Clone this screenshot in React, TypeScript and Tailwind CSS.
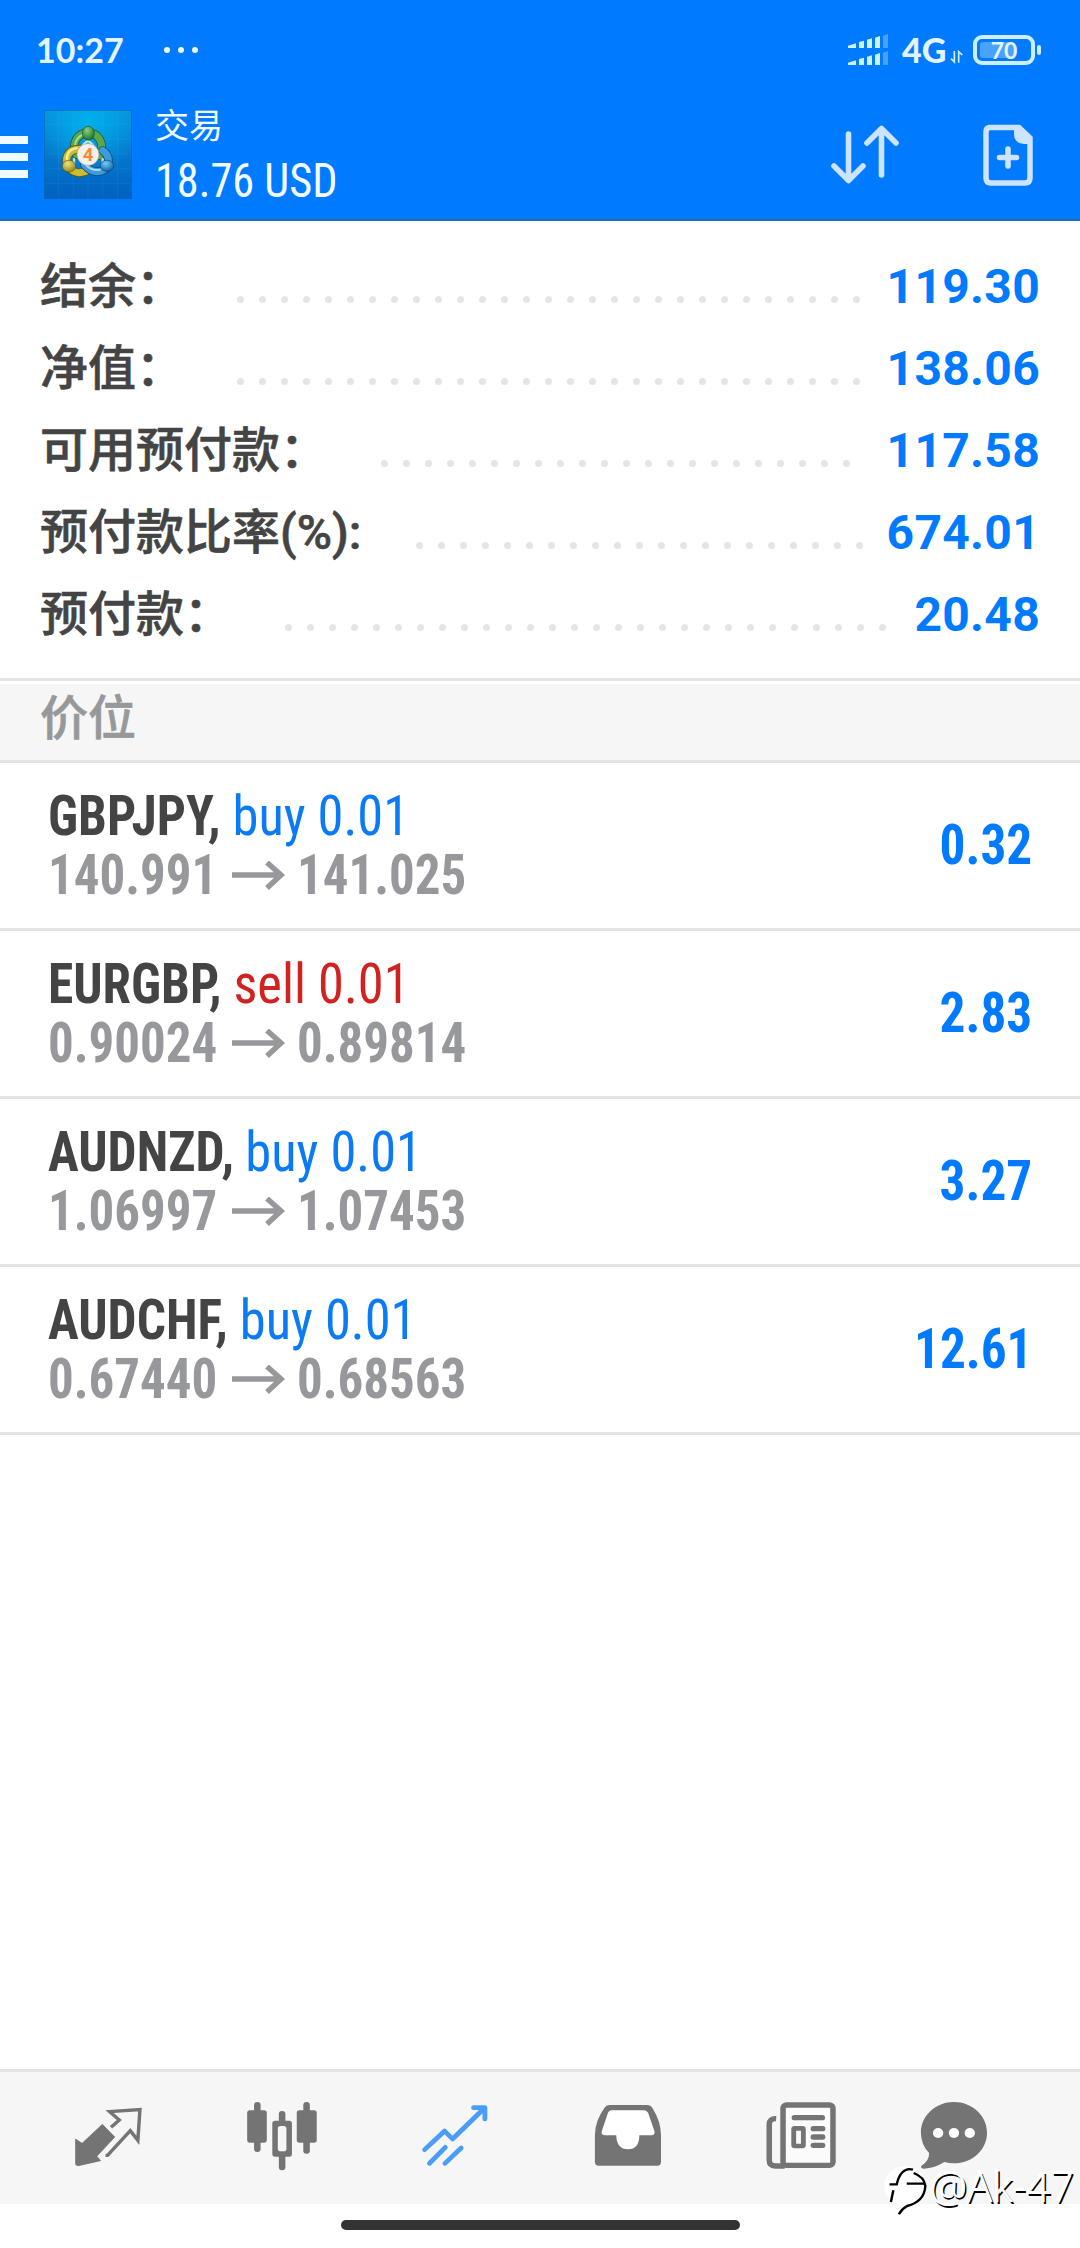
import React from "react";

const CJK = "font-['Noto_Sans_CJK_SC',sans-serif]";
const ROBOTO = "font-[Roboto,sans-serif]";

const summary = [
  { label: "结余：", latin: "", value: "119.30", width: "w-[197px]", dots: 29 },
  { label: "净值：", latin: "", value: "138.06", width: "w-[197px]", dots: 29 },
  { label: "可用预付款：", latin: "", value: "117.58", width: "w-[341px]", dots: 22 },
  { label: "预付款比率", latin: "(%):", value: "674.01", width: "w-[376px]", dots: 21 },
  { label: "预付款：", latin: "", value: "20.48", width: "w-[245px]", dots: 28 },
];

const positions = [
  { symbol: "GBPJPY,", side: "buy 0.01", sell: false, from: "140.991", to: "141.025", profit: "0.32" },
  { symbol: "EURGBP,", side: "sell 0.01", sell: true, from: "0.90024", to: "0.89814", profit: "2.83" },
  { symbol: "AUDNZD,", side: "buy 0.01", sell: false, from: "1.06997", to: "1.07453", profit: "3.27" },
  { symbol: "AUDCHF,", side: "buy 0.01", sell: false, from: "0.67440", to: "0.68563", profit: "12.61" },
];

function AppLogo() {
  return (
    <svg className="ml-4 h-[89px] w-[88px]" viewBox="0 0 264 268" preserveAspectRatio="none">
      <defs>
        <linearGradient id="sky" x1="0" y1="0" x2="0" y2="1">
          <stop offset="0" stopColor="#0790da" />
          <stop offset="1" stopColor="#0160c0" />
        </linearGradient>
        <radialGradient id="glow" cx=".5" cy=".12" r=".6">
          <stop offset="0" stopColor="#00b0ee" />
          <stop offset="1" stopColor="#00b0ee" stopOpacity="0" />
        </radialGradient>
        <radialGradient id="green" cx=".4" cy=".3" r=".7">
          <stop offset="0" stopColor="#8fce88" />
          <stop offset="1" stopColor="#17752c" />
        </radialGradient>
        <radialGradient id="gold" cx=".4" cy=".3" r=".7">
          <stop offset="0" stopColor="#efe57c" />
          <stop offset="1" stopColor="#94861a" />
        </radialGradient>
        <radialGradient id="blue" cx=".4" cy=".3" r=".7">
          <stop offset="0" stopColor="#7accf4" />
          <stop offset="1" stopColor="#0d63ad" />
        </radialGradient>
      </defs>
      <rect width="264" height="268" fill="url(#sky)" />
      <rect width="264" height="268" fill="url(#glow)" />
      <path d="M43 0V268M88 0V268M132 0V268M177 0V268M221 0V268M0 43H264M0 88H264M0 132H264M0 177H264M0 221H264" stroke="#7cd0f5" strokeOpacity=".14" strokeWidth="2" />
      <rect x="1" y="1" width="262" height="266" fill="none" stroke="#0a66b4" strokeWidth="2" />
      <g fill="none" strokeLinecap="round">
        <path d="M97 134C80 96 104 69 132 68C160 69 184 96 168 138" stroke="#2b5a24" strokeWidth="26" />
        <path d="M97 134C80 96 104 69 132 68C160 69 184 96 168 138" stroke="#58a84e" strokeWidth="21" />
        <path d="M97 128C84 96 106 74 126 72" stroke="#a9dba0" strokeWidth="6" />
        <path d="M110 118C66 116 60 152 76 174C94 194 116 192 134 180" stroke="#5b5a17" strokeWidth="26" />
        <path d="M110 118C66 116 60 152 76 174C94 194 116 192 134 180" stroke="#cdbd33" strokeWidth="21" />
        <path d="M98 115C72 118 66 140 70 152" stroke="#f4ee96" strokeWidth="7" />
        <path d="M176 122C200 138 200 174 172 184C148 190 134 180 122 166" stroke="#0c4a80" strokeWidth="26" />
        <path d="M176 122C200 138 200 174 172 184C148 190 134 180 122 166" stroke="#3f9bd8" strokeWidth="21" />
        <path d="M168 180C148 184 136 176 126 166" stroke="#a9dcf7" strokeWidth="6" />
        <path d="M118 104L132 92L146 104M90 148V166M176 148V162" stroke="#f2f7e4" strokeOpacity=".8" strokeWidth="7" />
      </g>
      <ellipse cx="133" cy="70" rx="18" ry="21" fill="url(#green)" stroke="#1b5722" strokeWidth="2" />
      <ellipse cx="75" cy="169" rx="20" ry="18" fill="url(#gold)" stroke="#5b5a17" strokeWidth="2" />
      <ellipse cx="189" cy="168" rx="20" ry="17" fill="url(#blue)" stroke="#0c4a80" strokeWidth="2" />
      <circle cx="132" cy="134" r="33" fill="#f3f1ee" stroke="#a89f86" strokeWidth="2" />
      <text x="132" y="154" textAnchor="middle" fontFamily="Roboto, sans-serif" fontWeight="700" fontSize="56" fill="#f58a3c">4</text>
    </svg>
  );
}

function StatusBar() {
  return (
    <div className="flex h-[100px] items-center pl-9 text-[#e3f3ff]">
      <span className="w-[88px] font-[Lato,sans-serif] text-[34px] leading-[40px] font-bold">10:27</span>
      <div className="ml-10 flex gap-2">
        <span className="size-1.5 rounded-full bg-[#f2fbff]" />
        <span className="size-1.5 rounded-full bg-[#f2fbff]" />
        <span className="size-1.5 rounded-full bg-[#f2fbff]" />
      </div>
      <svg className="ml-[650px] h-8 w-[41px] shrink-0" viewBox="0 0 123 96">
        {[0, 51].map((y) => (
          <g key={y} transform={`translate(0 ${y})`} fill="#cdf0ff">
            <path d="M0 42V35L24 28V42Z" />
            <path d="M33 42V24L48 20V42Z" />
            <path d="M57 42V17L72 13V42Z" />
            <path d="M81 42V11L96 6V42Z" />
            <path d="M105 42V5L120 0V42Z" fill="#4aa2ff" />
          </g>
        ))}
      </svg>
      <span className="ml-[13px] w-[44px] font-[Lato,sans-serif] text-[34px] leading-[40px] font-black whitespace-nowrap">4G</span>
      <svg className="mt-3.5 ml-1 h-[14px] w-[14px]" viewBox="0 0 42 42">
        <path d="M13 3V36L3 26M26 38V5L37 15" fill="none" stroke="#cdf0ff" strokeWidth="5" />
      </svg>
      <div className="relative ml-[9px] flex h-[30px] w-[62px] items-center justify-center rounded-[9px] border-[4px] border-[#cdeeff]">
        <span className="absolute left-[3px] h-4 w-[34px] rounded-[3px] bg-[#4aa2ff]" />
        <span className="relative font-[Lato,sans-serif] text-[23px] leading-[22px] font-bold">70</span>
      </div>
      <span className="ml-0.5 h-2.5 w-1 rounded-[2px] bg-[#cdeeff]" />
    </div>
  );
}

function Header() {
  return (
    <header className="h-[221px] border-b-2 border-[#1c6cc0] bg-[#007aff]">
      <StatusBar />
      <div className="flex">
        <div className="mt-[36px] flex flex-col gap-[9px]">
          <span className="h-2 w-7 bg-[#f0fbff]" />
          <span className="h-2 w-7 bg-[#f0fbff]" />
          <span className="h-2 w-7 bg-[#f0fbff]" />
        </div>
        <div className="mt-2.5">
          <AppLogo />
        </div>
        <div className="ml-[23px] w-[676px] text-[#f2fcff]">
          <div className={`${CJK} h-[53px] text-[34px] leading-[48px]`}>交易</div>
          <div className={`${ROBOTO} origin-left scale-x-[.923] text-[48px] leading-[56px] whitespace-nowrap [font-stretch:75%]`}>18.76 USD</div>
        </div>
        <svg className="mt-[24px] -ml-px h-[62px] w-[70px]" viewBox="830 124 70 62" fill="none" stroke="#cce4ff" strokeWidth="5.6" strokeLinecap="round" strokeLinejoin="round">
          <path d="M848.5 134V180M834 166L848.5 180.5L863 166M881.500 175V129M867 143L881.500 128.500L896 143" />
        </svg>
        <svg className="mt-[24px] ml-[80px] h-[62px] w-[56px]" viewBox="980 124 56 62">
          <path d="M988 127.500H1019L1030 138V178Q1030 183 1025 183H991Q986 183 986 178V132Q986 127.500 990 127.500Z" fill="none" stroke="#cce4ff" strokeWidth="5.500" />
          <path d="M1014 126H1020L1032 138V144H1024Q1014 143 1014 134Z" fill="#cce4ff" />
          <path d="M1008 149V166M999.500 157.500H1016.500" stroke="#cce4ff" strokeWidth="5.600" strokeLinecap="round" />
        </svg>
      </div>
    </header>
  );
}

function Summary() {
  return (
    <section className="h-[460px] border-b-[3px] border-[#e4e4e4] pt-6">
      {summary.map((row) => (
        <div key={row.label} className="flex h-[82px] items-center pr-10 pl-10">
          <div className={`${CJK} ${row.width} flex shrink-0 items-baseline pb-2 text-[48px] leading-[56px] font-medium whitespace-nowrap text-[#444] [-webkit-text-stroke:0.6px_#444]`}>
            {row.label}
            {row.latin && <span className="font-[Roboto,sans-serif] leading-[40px]">{row.latin}</span>}
          </div>
          <div className="flex gap-[15px] pt-[26px]">
            {Array.from({ length: row.dots }, (_, i) => (
              <span key={i} className="size-[7px] rounded-full bg-[#e5e5e5]" />
            ))}
          </div>
          <span className={`${ROBOTO} ml-auto pt-0.5 text-[48px] leading-[56px] font-bold tracking-[0.3px] text-[#007aff]`}>{row.value}</span>
        </div>
      ))}
    </section>
  );
}

function Position({ p }: { p: (typeof positions)[number] }) {
  return (
    <div className={`${ROBOTO} flex h-[168px] justify-between border-b-[3px] border-[#e4e4e4] pr-[48px] pl-[48px] text-[56px] leading-[59px] whitespace-nowrap [font-stretch:75%]`}>
      <div className="pt-[24px]">
        <div className="h-[59px] origin-left scale-x-[.918]">
          <span className="font-bold text-[#444]">{p.symbol}</span>{" "}
          <span className={`inline-block origin-left scale-x-[1.02] ${p.sell ? "text-[#d12222]" : "text-[#0b7af5]"}`}>{p.side}</span>
        </div>
        <div className="flex h-[59px] w-[420px] items-center font-bold text-[#97989b]">
          <span className="w-[184px]">
            <span className="inline-block origin-left scale-x-[.91]">{p.from}</span>
          </span>
          <svg className="h-[30px] w-[53px] shrink-0" viewBox="0 0 53 30" fill="none" stroke="#97989b" strokeWidth="5.500">
            <path d="M0 14H50M35 1.500L49 14L35 27" />
          </svg>
          <span className="ml-3">
            <span className="inline-block origin-left scale-x-[.91]">{p.to}</span>
          </span>
        </div>
      </div>
      <span className="origin-right scale-x-[.915] pt-[53px] font-bold text-[#007aff]">{p.profit}</span>
    </div>
  );
}

const tabSvg = "h-[80px] shrink-0";

function TabBar() {
  return (
    <nav className="flex h-[135px] items-start border-t-[3px] border-[#e4e4e4] bg-[#f6f6f6] pt-[25px] pl-[69px]">
      <svg className={`${tabSvg} w-[80px]`} viewBox="200 140 232.300 240" preserveAspectRatio="none">
        <path d="M297 222L333 260L281 318L292 331L228 346Q218 347 219 338V266L238 279Z" fill="#747474" stroke="#747474" strokeWidth="2" strokeLinejoin="round" />
        <path d="M322 231L346 209L318 184L406 178L400 270L378 241L312 315H306" fill="none" stroke="#747474" strokeWidth="10" strokeLinejoin="miter" />
      </svg>
      <svg className={`${tabSvg} ml-[93px] w-[80px]`} viewBox="700 140 232.300 240" preserveAspectRatio="none">
        <g fill="#747474">
          <rect x="735" y="155" width="19" height="150" rx="9" />
          <rect x="715" y="180" width="57" height="97" rx="8" />
          <rect x="878" y="155" width="19" height="155" rx="9" />
          <rect x="859" y="180" width="58" height="97" rx="8" />
          <rect x="807" y="182" width="19" height="178" rx="9" />
          <rect x="788" y="211" width="57" height="108" rx="8" />
        </g>
        <rect x="804" y="227" width="25" height="76" rx="8" fill="#f6f6f6" />
      </svg>
      <svg className={`${tabSvg} ml-[93px] w-[80px]`} viewBox="1203 140 232.300 240" preserveAspectRatio="none" fill="none" stroke="#4a9df8" strokeWidth="14" strokeLinecap="round">
        <path d="M1231 298L1289 242L1312 266L1402 176" strokeLinejoin="round" />
        <path d="M1373 172H1406V206" strokeLinejoin="round" />
        <path d="M1392 180L1406 172V192Z" fill="#4a9df8" strokeWidth="5" />
        <path d="M1245 339L1291 291M1290 339L1337 293" />
      </svg>
      <svg className={`${tabSvg} ml-[93px] w-[80px]`} viewBox="138 140 232.300 240" preserveAspectRatio="none">
        <path d="M200 164H310Q320 164 325 173Q350 214 350 255V334Q350 346 339 346H169Q158 346 158 334V255Q158 212 186 172Q191 164 200 164Z" fill="#747474" />
        <path d="M207 180H299Q309 180 313 189L331 243Q333 255 322 255H287Q287 297 254 297Q221 297 220 255H187Q175 254 178 243L195 190Q199 180 207 180Z" fill="#fff" />
      </svg>
      <svg className={`${tabSvg} ml-[93px] w-[80px]`} viewBox="641 140 232.300 240" preserveAspectRatio="none">
        <path d="M685 205Q665 204 665 222V330Q665 347 682 347H710" fill="none" stroke="#747474" strokeWidth="16" />
        <rect x="705" y="164" width="145" height="181" rx="10" fill="#fbfbfb" stroke="#747474" strokeWidth="16" />
        <path d="M738 202H819M793 235H820M793 260H820M793 285H820" stroke="#747474" strokeWidth="16" strokeLinecap="round" />
        <rect x="736" y="234" width="28" height="53" rx="3" fill="none" stroke="#747474" strokeWidth="14" />
      </svg>
      <svg className={`${tabSvg} ml-[73px] w-[80px]`} viewBox="1083 140 232.300 240" preserveAspectRatio="none">
        <path d="M1199 155C1252 155 1295 196 1295 247C1295 298 1252 339 1199 339Q1184 339 1171 335Q1142 354 1112 355Q1102 355 1104 347Q1127 332 1127 308Q1103 282 1103 247C1103 196 1146 155 1199 155Z" fill="#747474" />
        <circle cx="1153" cy="248" r="15" fill="#fff" />
        <circle cx="1199" cy="248" r="15" fill="#fff" />
        <circle cx="1245" cy="248" r="15" fill="#fff" />
      </svg>
    </nav>
  );
}

function Watermark() {
  return (
    <div className="absolute top-[2161px] left-[883px] flex">
      <svg className="h-[62px] w-[48px]" viewBox="998 336 139.400 186" preserveAspectRatio="none">
        <circle cx="1062" cy="412" r="61" fill="#fff" />
        <g fill="none" stroke="#000" strokeWidth="7">
          <path d="M1085 362C1060 354 1044 376 1038 406H1017M1028 424L1021 459" />
          <path d="M1087 372Q1118 384 1121 411Q1118 458 1068 471Q1052 480 1044 496M1067 404H1120" />
        </g>
      </svg>
      <span className="-mt-0.5 -ml-px font-['Open_Sans',sans-serif] text-[42px] leading-[54px] font-light whitespace-nowrap text-white [text-shadow:-1px_-1px_0_#fff,1.5px_1.5px_0_#000]">@Ak-47</span>
    </div>
  );
}

export default function App() {
  return (
    <div className="relative flex h-[2248px] w-[1080px] flex-col overflow-hidden bg-white">
      <Header />
      <Summary />
      <div className={`${CJK} mt-[3px] h-[79px] border-b-[3px] border-[#e4e4e4] bg-[#f6f6f6] pl-10 text-[48px] leading-[61px] font-medium text-[#97989b] [-webkit-text-stroke:0.6px_#97989b]`}>价位</div>
      <main className="flex-1">
        {positions.map((p) => (
          <Position key={p.symbol} p={p} />
        ))}
      </main>
      <TabBar />
      <div className="flex h-11 justify-center pt-4">
        <span className="h-2.5 w-[399px] rounded-full bg-[#333]" />
      </div>
      <Watermark />
    </div>
  );
}
